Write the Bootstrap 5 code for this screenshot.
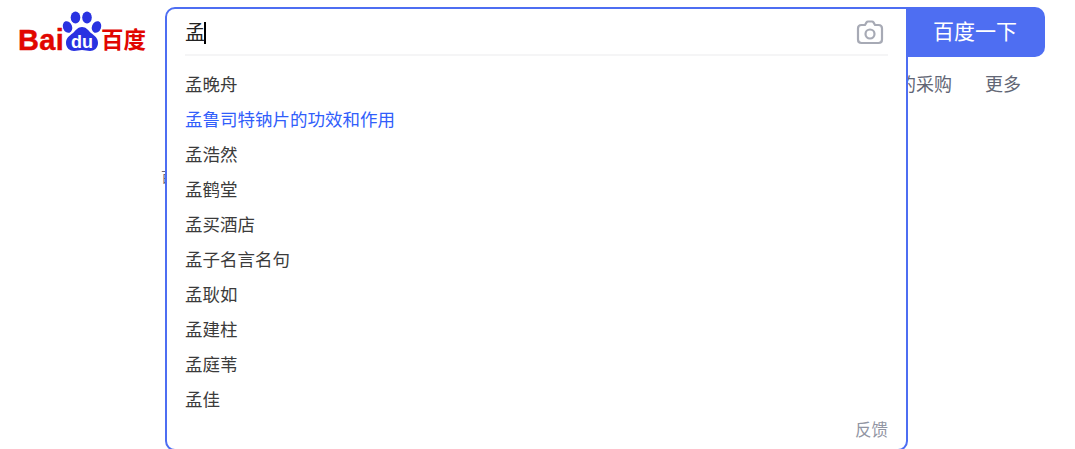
<!DOCTYPE html>
<html lang="zh-CN">
<head>
    <meta charset="UTF-8">
    <meta name="viewport" content="width=device-width, initial-scale=1.0">
    <title>百度一下</title>
    <link href="https://cdn.jsdelivr.net/npm/bootstrap@5.3.2/dist/css/bootstrap.min.css" rel="stylesheet">
    <style>
        body { font-family: "Liberation Sans", "Noto Sans CJK SC", sans-serif; background: #fff; }
        .page-shell { height: 449px; overflow: hidden; }
        .top-row { padding-top: 7px; }
        .logo-cell { width: 165px; height: 50px; padding-left: 18px; }
        .logo-svg { display: block; overflow: visible; }
        .logo-latin { font-family: "Liberation Sans", sans-serif; font-weight: 700; font-size: 29px; letter-spacing: .3px; fill: #e10601; stroke: #e10601; stroke-width: .4px; }
        .logo-cjk { font-family: "Noto Sans CJK SC", sans-serif; font-weight: 700; font-size: 22.500px; fill: #e10601; }
        .logo-du { font-family: "Liberation Sans", sans-serif; font-weight: 700; font-size: 18px; fill: #fff; }
        .search-box { width: 740px; height: 50px; position: relative; }
        .sug-panel { position: absolute; top: 0; left: 0; width: 743px; height: 444px; background: #fff; border: 2px solid #4e6ef2; border-radius: 10px 0 10px 10px; z-index: 5; padding: 0 18px; }
        .input-row { height: 47px; border-bottom: 2px solid #f5f5f6; padding-top: 3px; color: #222; font-size: 20px; }
        .typed { width: 21px; height: 22px; border-right: 2px solid #000; display: flex; align-items: center; }
        .camera-icon { margin-right: 4px; }
        .sug-list { margin: 12px 0 0; padding: 0; list-style: none; }
        .sug-list li { height: 35px; line-height: 35px; font-size: 17.5px; color: #3b3b3b; }
        .sug-list li.is-hover { color: #315efb; }
        .feedback { font-size: 16.5px; color: #9195a3; line-height: 20px; margin-top: 2px; }
        .search-btn { width: 140px; height: 50px; background: #4e6ef2; color: #fff; border: 0; border-radius: 0 10px 10px 0; font-size: 21px; padding: 0; }
        .tab-row { padding-left: 898px; padding-top: 15px; height: 28px; font-size: 18px; color: #626675; line-height: 26px; }
        .tab-row span + span { margin-left: 33px; }
        .result-hint { padding-left: 161px; margin-top: 82px; font-size: 14px; color: #626675; line-height: 20px; }
    </style>
</head>
<body>
    <div class="page-shell">
        <div class="d-flex top-row">
            <div class="logo-cell flex-shrink-0">
                <svg class="logo-svg" width="130" height="46" viewBox="0 0 130 46">
                    <!-- coords are relative to the logo cell, 18px in and 7px down -->
                    <text class="logo-latin" x="0" y="43">Bai</text>
                    <g fill="#2932e1">
                        <ellipse cx="57.500" cy="10.500" rx="4.800" ry="6"/>
                        <ellipse cx="69" cy="10.500" rx="4.800" ry="6"/>
                        <ellipse cx="49.500" cy="20" rx="4.600" ry="6" transform="rotate(-20 49.500 20)"/>
                        <ellipse cx="78.500" cy="20" rx="4.600" ry="6" transform="rotate(20 78.500 20)"/>
                        <path d="M64 20c4 0 6 3 9 6 4 3 7 5 7 10 0 5-4 8-8 8-3 0-5-1-8-1s-5 1-8 1c-4 0-8-3-8-8 0-5 3-7 7-10 3-3 5-6 9-6z"/>
                    </g>
                    <text class="logo-du" x="64" y="41" text-anchor="middle">du</text>
                    <text class="logo-cjk" x="83" y="41">百度</text>
                </svg>
            </div>
            <div class="search-box flex-shrink-0">
                <div class="sug-panel">
                    <div class="input-row d-flex align-items-center justify-content-between">
                        <span class="typed">孟</span>
                        <svg class="camera-icon" width="28" height="26" viewBox="0 0 28 26" fill="none" stroke="#a7aab5" stroke-width="2.200">
                            <path d="M9 5l1.500-2.600c.3-.5.8-.9 1.500-.9h4c.7 0 1.200.4 1.500.9L19 5h3.500C24.500 5 26 6.500 26 8.500v11c0 2-1.500 3.500-3.500 3.500h-17C3.500 23 2 21.500 2 19.500v-11C2 6.500 3.500 5 5.500 5z" stroke-linejoin="round"/>
                            <circle cx="14" cy="14" r="4.500"/>
                        </svg>
                    </div>
                    <ul class="sug-list">
                        <li>孟晚舟</li>
                        <li class="is-hover">孟鲁司特钠片的功效和作用</li>
                        <li>孟浩然</li>
                        <li>孟鹤堂</li>
                        <li>孟买酒店</li>
                        <li>孟子名言名句</li>
                        <li>孟耿如</li>
                        <li>孟建柱</li>
                        <li>孟庭苇</li>
                        <li>孟佳</li>
                    </ul>
                    <div class="feedback text-end">反馈</div>
                </div>
            </div>
            <button type="button" class="search-btn flex-shrink-0">百度一下</button>
        </div>
        <div class="tab-row text-nowrap">
            <span>的采购</span><span>更多</span>
        </div>
        <div class="result-hint text-nowrap">百度为您找到相关结果</div>
    </div>
    <script src="https://cdn.jsdelivr.net/npm/bootstrap@5.3.2/dist/js/bootstrap.bundle.min.js"></script>
</body>
</html>
